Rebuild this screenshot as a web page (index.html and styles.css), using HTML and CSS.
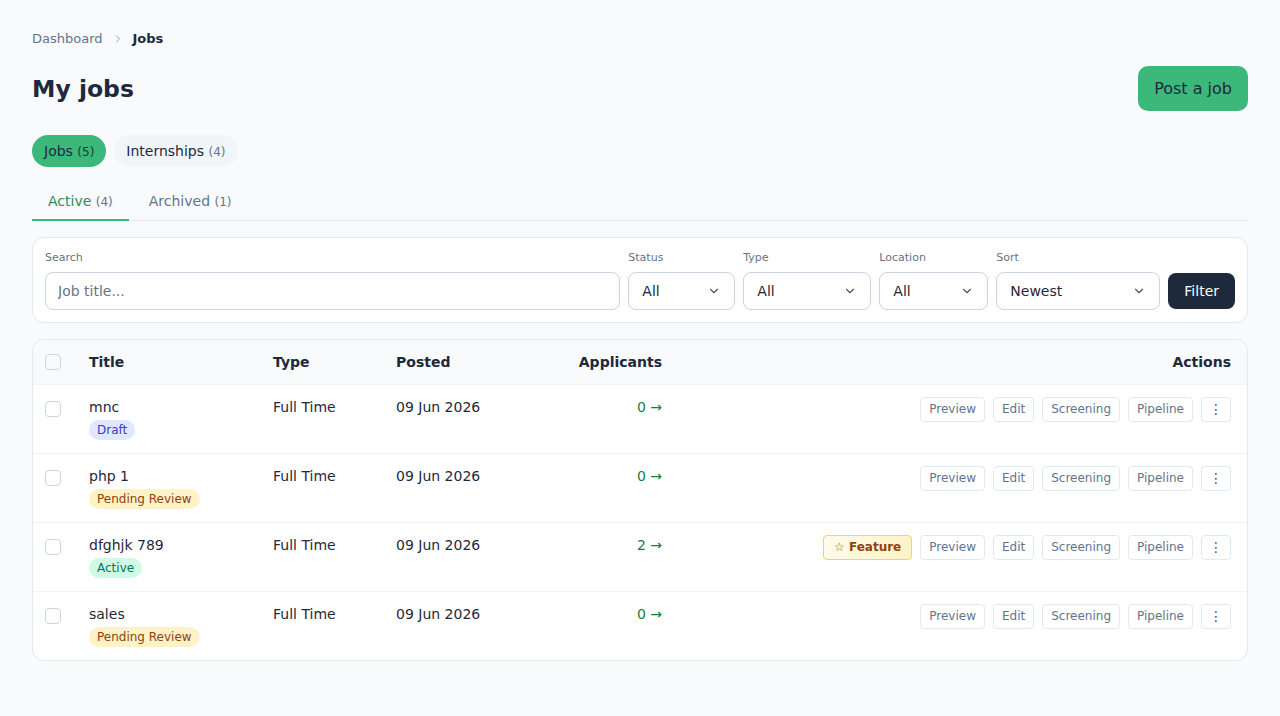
FILE: index.html
```html
<!DOCTYPE html>
<html lang="en">
  <head>
    <meta charset="UTF-8" />
    <meta name="viewport" content="width=device-width, initial-scale=1.0" />
    <title>My jobs</title>
    <link rel="stylesheet" href="styles.css">
  </head>
  <body>
    <div class="page">
      <nav class="crumbs">
        <span class="crumbLink">Dashboard</span>
        <svg class="crumbSep" viewBox="0 0 24 24" width="12" height="12">
          <path d="M9 6l6 6-6 6" fill="none" stroke="currentColor" stroke-width="2" stroke-linecap="round" stroke-linejoin="round" />
        </svg>
        <span class="crumbCurrent">Jobs</span>
      </nav>

      <div class="pageHead">
        <h1>My jobs</h1>
        <button class="postBtn">Post a job</button>
      </div>

      <div class="pills">
        <span class="pill pillOn">Jobs <small>(5)</small></span>
        <span class="pill">Internships <small>(4)</small></span>
      </div>

      <div class="tabs">
        <span class="tab tabOn">Active <small>(4)</small></span>
        <span class="tab">Archived <small>(1)</small></span>
      </div>

      <form class="filters">
        <div class="field fieldSearch">
          <label>Search</label>
          <input type="text" placeholder="Job title..." />
        </div>
        <div class="field fieldStatus">
          <label>Status</label>
          <div class="select">All<svg viewBox="0 0 24 24" width="14" height="14"><path d="M6 9l6 6 6-6" fill="none" stroke="currentColor" stroke-width="2" stroke-linecap="round" stroke-linejoin="round" /></svg></div>
        </div>
        <div class="field fieldType">
          <label>Type</label>
          <div class="select">All<svg viewBox="0 0 24 24" width="14" height="14"><path d="M6 9l6 6 6-6" fill="none" stroke="currentColor" stroke-width="2" stroke-linecap="round" stroke-linejoin="round" /></svg></div>
        </div>
        <div class="field fieldLocation">
          <label>Location</label>
          <div class="select">All<svg viewBox="0 0 24 24" width="14" height="14"><path d="M6 9l6 6 6-6" fill="none" stroke="currentColor" stroke-width="2" stroke-linecap="round" stroke-linejoin="round" /></svg></div>
        </div>
        <div class="field fieldSort">
          <label>Sort</label>
          <div class="select">Newest<svg viewBox="0 0 24 24" width="14" height="14"><path d="M6 9l6 6 6-6" fill="none" stroke="currentColor" stroke-width="2" stroke-linecap="round" stroke-linejoin="round" /></svg></div>
        </div>
        <button type="button" class="filterBtn">Filter</button>
      </form>

      <div class="tableCard">
        <table class="jobs">
          <colgroup>
            <col class="colCheck" />
            <col class="colTitle" />
            <col class="colType" />
            <col class="colPosted" />
            <col class="colApps" />
            <col />
          </colgroup>
          <thead>
            <tr>
              <th><span class="check"></span></th>
              <th>Title</th>
              <th>Type</th>
              <th>Posted</th>
              <th class="right">Applicants</th>
              <th class="right">Actions</th>
            </tr>
          </thead>
          <tbody>
            <tr>
              <td><span class="check"></span></td>
              <td>mnc<br /><span class="badge badgeDraft">Draft</span></td>
              <td>Full Time</td>
              <td>09 Jun 2026</td>
              <td class="right apps">0 →</td>
              <td class="right">
                <div class="actions">
                  <button class="act">Preview</button>
                  <button class="act">Edit</button>
                  <button class="act">Screening</button>
                  <button class="act">Pipeline</button>
                  <button class="act more">⋮</button>
                </div>
              </td>
            </tr>
            <tr>
              <td><span class="check"></span></td>
              <td>php 1<br /><span class="badge badgePending">Pending Review</span></td>
              <td>Full Time</td>
              <td>09 Jun 2026</td>
              <td class="right apps">0 →</td>
              <td class="right">
                <div class="actions">
                  <button class="act">Preview</button>
                  <button class="act">Edit</button>
                  <button class="act">Screening</button>
                  <button class="act">Pipeline</button>
                  <button class="act more">⋮</button>
                </div>
              </td>
            </tr>
            <tr>
              <td><span class="check"></span></td>
              <td>dfghjk 789<br /><span class="badge badgeActive">Active</span></td>
              <td>Full Time</td>
              <td>09 Jun 2026</td>
              <td class="right apps">2 →</td>
              <td class="right">
                <div class="actions">
                  <button class="act feature"><span class="star">☆</span> Feature</button>
                  <button class="act">Preview</button>
                  <button class="act">Edit</button>
                  <button class="act">Screening</button>
                  <button class="act">Pipeline</button>
                  <button class="act more">⋮</button>
                </div>
              </td>
            </tr>
            <tr>
              <td><span class="check"></span></td>
              <td>sales<br /><span class="badge badgePending">Pending Review</span></td>
              <td>Full Time</td>
              <td>09 Jun 2026</td>
              <td class="right apps">0 →</td>
              <td class="right">
                <div class="actions">
                  <button class="act">Preview</button>
                  <button class="act">Edit</button>
                  <button class="act">Screening</button>
                  <button class="act">Pipeline</button>
                  <button class="act more">⋮</button>
                </div>
              </td>
            </tr>
          </tbody>
        </table>
      </div>
    </div>
  </body>
</html>
```

FILE: styles.css
```css
* {
  box-sizing: border-box;
}
body {
  margin: 0;
  background: #f8fafc;
  color: #1e293b;
  font-family: "DejaVu Sans", sans-serif;
  font-size: 14px;
}
button,
input {
  font-family: inherit;
}
.page {
  padding: 31px 32px 40px;
}

.crumbs {
  display: flex;
  align-items: center;
  gap: 9px;
  font-size: 13px;
  line-height: 16px;
}
.crumbLink {
  color: #64748b;
}
.crumbSep {
  color: #94a3b8;
}
.crumbCurrent {
  font-weight: bold;
  color: #1e293b;
}

.pageHead {
  display: flex;
  justify-content: space-between;
  align-items: center;
  margin-top: 19px;
}
h1 {
  margin: 0;
  font-size: 23.5px;
  line-height: 30px;
  color: #1e293b;
}
.postBtn {
  height: 45px;
  padding: 0 16px;
  border: none;
  border-radius: 10px;
  background: #3db87b;
  color: #1e293b;
  font-size: 16px;
}

.pills {
  display: flex;
  gap: 8px;
  margin-top: 24px;
}
.pill {
  height: 32px;
  line-height: 32px;
  padding: 0 12px;
  border-radius: 16px;
  background: #f1f5f9;
  color: #1e293b;
}
.pill small,
.tab small {
  font-size: 12px;
  color: #64748b;
}
.pillOn {
  background: #3db87b;
}
.pillOn small {
  color: #1e3a2c;
}

.tabs {
  display: flex;
  gap: 4px;
  margin-top: 24px;
  border-bottom: 1px solid #e2e8f0;
}
.tab {
  padding: 0 16px 7px;
  line-height: 20px;
  color: #64748b;
  border-bottom: 2px solid transparent;
  margin-bottom: -1px;
}
.tabOn {
  color: #2f8c5c;
  border-bottom-color: #3db87b;
}

.filters {
  display: flex;
  align-items: flex-end;
  gap: 8px;
  margin-top: 16px;
  padding: 12px;
  background: #fff;
  border: 1px solid #e2e8f0;
  border-radius: 12px;
}
.field label {
  display: block;
  font-size: 11px;
  line-height: 16px;
  color: #64748b;
  margin-bottom: 6px;
}
.fieldSearch {
  flex: 1;
}
.fieldSearch input {
  width: 100%;
  height: 38px;
  padding: 0 12px;
  border: 1px solid #cbd5e1;
  border-radius: 8px;
  font-size: 14px;
  color: #1e293b;
}
.fieldSearch input::placeholder {
  color: #6b7280;
}
.fieldStatus {
  width: 107px;
}
.fieldType {
  width: 128px;
}
.fieldLocation {
  width: 109px;
}
.fieldSort {
  width: 164px;
}
.select {
  display: flex;
  justify-content: space-between;
  align-items: center;
  height: 38px;
  padding: 0 13px;
  background: #fff;
  border: 1px solid #cbd5e1;
  border-radius: 8px;
  color: #1e293b;
}
.select svg {
  color: #475569;
}
.filterBtn {
  height: 36px;
  padding: 0 16px;
  margin-bottom: 1px;
  border: none;
  border-radius: 8px;
  background: #1e293b;
  color: #fff;
  font-size: 14px;
}

.tableCard {
  margin-top: 16px;
  background: #fff;
  border: 1px solid #e2e8f0;
  border-radius: 12px;
  overflow: hidden;
}
.jobs {
  width: 100%;
  border-collapse: collapse;
  table-layout: fixed;
}
.colCheck {
  width: 44px;
}
.colTitle {
  width: 184px;
}
.colType {
  width: 123px;
}
.colPosted {
  width: 136px;
}
.colApps {
  width: 154px;
}
.jobs th {
  height: 44px;
  padding: 0 12px;
  background: #f8fafc;
  text-align: left;
  font-weight: bold;
  color: #1e293b;
}
.jobs th:last-child,
.jobs td:last-child {
  padding-right: 16px;
}
.jobs td {
  height: 69px;
  padding: 12px 12px 13px;
  vertical-align: top;
  line-height: 20px;
  border-top: 1px solid #f1f5f9;
  color: #1e293b;
}
.jobs .right {
  text-align: right;
}
.check {
  display: inline-block;
  width: 16px;
  height: 16px;
  border: 1px solid #cbd5e1;
  border-radius: 4px;
  vertical-align: middle;
}
.jobs td .check {
  margin-top: 2px;
}
.jobs .apps {
  color: #15803d;
}

.badge {
  display: inline-block;
  margin-top: 3px;
  padding: 0 8px;
  border-radius: 10px;
  font-size: 12px;
  line-height: 20px;
}
.badgeDraft {
  background: #e0e7ff;
  color: #4338ca;
}
.badgePending {
  background: #fef3c7;
  color: #92400e;
}
.badgeActive {
  background: #d1fae5;
  color: #047857;
}

.actions {
  display: flex;
  justify-content: flex-end;
  gap: 8px;
}
.act {
  height: 25px;
  padding: 0 8px;
  background: #fff;
  border: 1px solid #e2e8f0;
  border-radius: 4px;
  font-size: 12px;
  color: #64748b;
}
.more {
  width: 30px;
  padding: 0;
  font-size: 14px;
  color: #475569;
}
.feature {
  padding: 0 10px;
  background: linear-gradient(90deg, #fffbeb, #fef3c7);
  border-color: #fcd34d;
  color: #92400e;
  font-weight: bold;
}
.star {
  font-weight: normal;
  color: #a16207;
}
```
